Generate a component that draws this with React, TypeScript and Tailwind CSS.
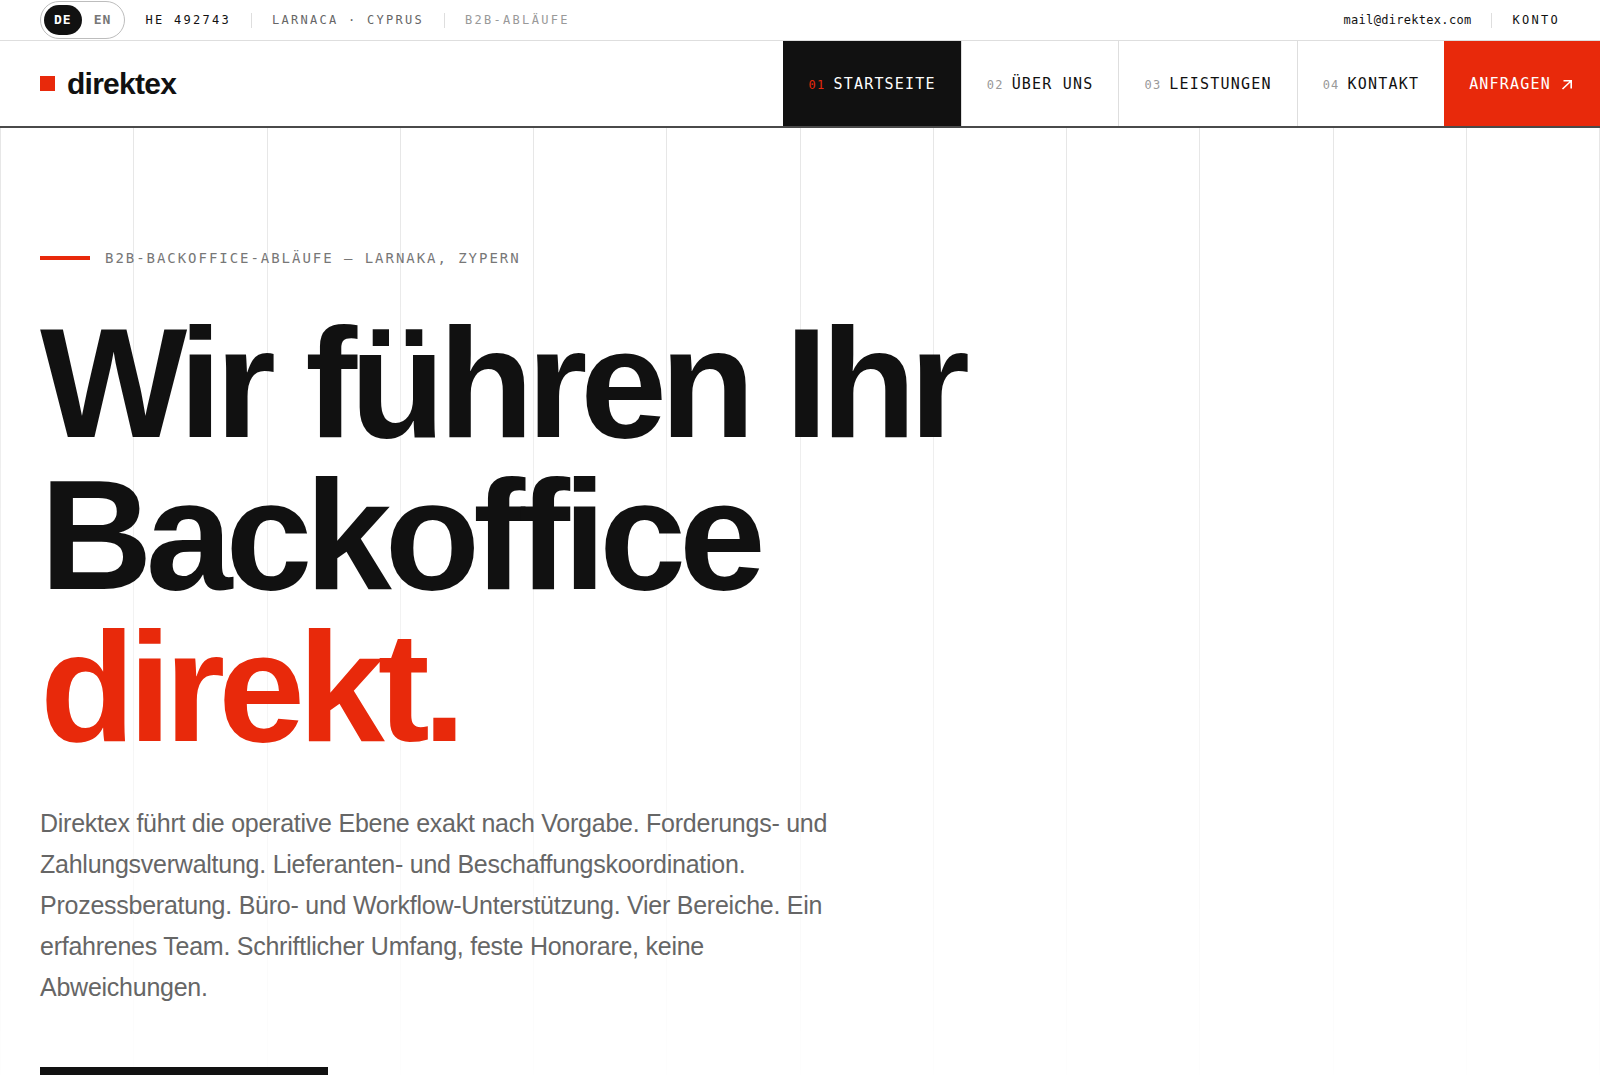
import { clsx } from 'clsx';

const mono = "font-['DejaVu_Sans_Mono','Liberation_Mono',monospace]";

const navItems = [
  { number: '01', label: 'Startseite', href: '#start', active: true },
  { number: '02', label: 'Über uns', href: '#ueber-uns' },
  { number: '03', label: 'Leistungen', href: '#leistungen' },
  { number: '04', label: 'Kontakt', href: '#kontakt' },
];

function Divider() {
  return <span className="h-[15px] w-px bg-[#dedede]" />;
}

function LanguageSwitch() {
  return (
    <div className="flex gap-0.5 rounded-full border border-[#bdbdbd] p-[3px] text-[13px] leading-[30px] font-bold tracking-[0.08em]">
      <button type="button" className="rounded-full bg-[#111] px-[10px] text-white">
        DE
      </button>
      <button type="button" className="rounded-full px-[10px] text-[#777]">
        EN
      </button>
    </div>
  );
}

function TopBar() {
  return (
    <div
      className={clsx(
        mono,
        'flex h-[41px] shrink-0 items-center justify-between border-b border-[#dedede] px-10 text-xs text-[#111]',
      )}
    >
      <div className="flex items-center gap-5 tracking-[0.19em] uppercase">
        <LanguageSwitch />
        <span>HE 492743</span>
        <Divider />
        <span className="text-[#666]">Larnaca · Cyprus</span>
        <Divider />
        <span className="text-[#999]">B2B-Abläufe</span>
      </div>
      <div className="flex items-center gap-5">
        <a href="mailto:mail@direktex.com" className="tracking-wide">
          mail@direktex.com
        </a>
        <Divider />
        <a href="#konto" className="tracking-[0.19em] uppercase">
          Konto
        </a>
      </div>
    </div>
  );
}

function ArrowUpRight() {
  return (
    <svg className="size-4" viewBox="0 0 16 16" fill="none" stroke="currentColor" strokeWidth="1.6">
      <path d="M3.5 12 12 4M4.5 3.8h7.7v7.7" />
    </svg>
  );
}

function Header() {
  return (
    <header className="flex h-[87px] shrink-0 justify-between border-b-2 border-[#4a4a4a] pl-10">
      <a href="#start" className="flex items-center gap-3 text-[#111]">
        <span className="size-[15px] bg-[#e8290b]" />
        <span className="text-[30px] leading-9 font-bold tracking-tight">direktex</span>
      </a>
      <nav className={clsx(mono, 'flex text-[15px] tracking-[0.08em] uppercase')}>
        {navItems.map((item) => (
          <a
            key={item.number}
            href={item.href}
            className={clsx(
              'flex items-center gap-2 border-l px-[25px] pt-0.5',
              item.active ? 'border-[#111] bg-[#111] text-white' : 'border-[#dedede] text-[#111]',
            )}
          >
            <span className={clsx('text-xs', item.active ? 'text-[#e8290b]' : 'text-[#999]')}>
              {item.number}
            </span>
            {item.label}
          </a>
        ))}
        <a
          href="#anfragen"
          className="flex items-center gap-2 bg-[#e8290b] px-[25px] pt-0.5 text-white"
        >
          Anfragen
          <ArrowUpRight />
        </a>
      </nav>
    </header>
  );
}

function GridLines() {
  return (
    <div
      aria-hidden="true"
      className="absolute inset-0 grid grid-cols-12 border-r border-[#e6e6e6] [mask-image:linear-gradient(to_bottom,black,transparent)]"
    >
      {Array.from({ length: 12 }, (_, i) => (
        <div key={i} className="border-l border-[#e6e6e6]" />
      ))}
    </div>
  );
}

function Hero() {
  return (
    <main className="relative grow">
      <GridLines />
      <div className="relative px-10 pt-[120px]">
        <div className="flex items-center gap-[15px]">
          <span className="h-1 w-[50px] bg-[#e8290b]" />
          <p className={clsx(mono, 'text-sm tracking-[0.14em] text-[#777] uppercase')}>
            B2B-Backoffice-Abläufe — Larnaka, Zypern
          </p>
        </div>
        <h1 className="mt-[39px] text-[156px] leading-[152px] font-bold tracking-[-0.045em] text-[#111]">
          Wir führen Ihr
          <br />
          Backoffice
          <br />
          <span className="text-[#e8290b]">direkt.</span>
        </h1>
        <p className="mt-10 max-w-[800px] text-[25px] leading-[41px] tracking-[-0.01em] text-[#666]">
          Direktex führt die operative Ebene exakt nach Vorgabe. Forderungs- und Zahlungsverwaltung.
          Lieferanten- und Beschaffungskoordination. Prozessberatung. Büro- und
          Workflow-Unterstützung. Vier Bereiche. Ein erfahrenes Team. Schriftlicher Umfang, feste
          Honorare, keine Abweichungen.
        </p>
        <button type="button" className="mt-[59px] block h-16 w-72 bg-[#111]" />
      </div>
    </main>
  );
}

export default function App() {
  return (
    <div className="flex h-screen flex-col overflow-hidden bg-white font-['Liberation_Sans',Arial,sans-serif]">
      <TopBar />
      <Header />
      <Hero />
    </div>
  );
}
